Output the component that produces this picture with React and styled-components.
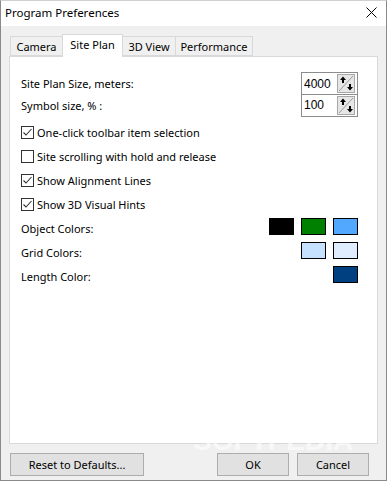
import React from "react";
import styled, { createGlobalStyle } from "styled-components";

const GlobalStyle = createGlobalStyle`
  html, body {
    margin: 0;
    padding: 0;
    background: #f0f0f0;
  }
  body {
    font-family: "Noto Sans", "Open Sans", sans-serif;
    font-size: 11px;
    color: #000;
  }
`;

const Window = styled.div`
  position: relative;
  width: 387px;
  height: 481px;
  box-sizing: border-box;
  border: 1px solid #8a8a8a;
  border-top-color: #d0d0d0;
  display: flex;
  flex-direction: column;
  background: #f0f0f0;
  overflow: hidden;
`;

const TitleBar = styled.div`
  height: 25px;
  flex: none;
  background: #fff;
  display: flex;
  align-items: center;
  justify-content: space-between;
  padding: 0 8px 0 4px;
`;

const Title = styled.span`
  font-size: 11.5px;
  line-height: 1;
  margin-top: -1px;
`;

const CloseButton = styled.div`
  width: 14px;
  height: 14px;
  display: flex;
  align-items: center;
  justify-content: center;
  margin-top: -2px;
`;

const Body = styled.div`
  flex: 1;
  display: flex;
  flex-direction: column;
  padding: 8px 8px 4px 8px;
  min-height: 0;
`;

const TabRow = styled.div`
  display: flex;
  align-items: flex-end;
  height: 22px;
  padding-left: 1px;
  position: relative;
  z-index: 1;
`;

const Tab = styled.div`
  box-sizing: border-box;
  width: ${(p) => p.$w}px;
  height: ${(p) => (p.$active ? 23 : 20)}px;
  margin-bottom: ${(p) => (p.$active ? -1 : 0)}px;
  background: ${(p) => (p.$active ? "#fff" : "#f0f0f0")};
  border: 1px solid #d9d9d9;
  border-bottom: ${(p) => (p.$active ? "none" : "1px solid #d9d9d9")};
  border-left-width: ${(p) => (p.$first || p.$active ? 1 : 0)}px;
  border-right-width: ${(p) => (p.$beforeActive ? 0 : 1)}px;
  display: flex;
  align-items: center;
  justify-content: center;
  white-space: nowrap;
  position: relative;
  z-index: ${(p) => (p.$active ? 2 : 1)};
  padding-bottom: ${(p) => (p.$active ? 3 : 0)}px;
`;

const Panel = styled.div`
  flex: 1;
  background: #fff;
  border: 1px solid #d9d9d9;
  padding: 15px 19px 0 11px;
  display: flex;
  flex-direction: column;
`;

const SpinRow = styled.div`
  display: flex;
  align-items: center;
  justify-content: space-between;
  height: 22px;
`;

const SpinBox = styled.div`
  box-sizing: border-box;
  width: 57px;
  height: ${(p) => (p.$last ? 23 : 22)}px;
  border: 1px solid #8c8c8c;
  border-bottom-width: ${(p) => (p.$last ? 1 : 0)}px;
  display: flex;
  align-items: center;
  justify-content: space-between;
  padding: 0 2px 0 2px;
`;

const SpinValue = styled.span`
  font-family: "Liberation Sans", Arial, sans-serif;
  font-size: 12px;
`;

const SpinButton = styled.div`
  width: 18px;
  height: 19px;
  display: flex;
`;

const CheckList = styled.div`
  display: flex;
  flex-direction: column;
  margin-top: 4px;
`;

const CheckRow = styled.label`
  display: flex;
  align-items: center;
  height: 24px;
  gap: 3px;
`;

const Box = styled.span`
  box-sizing: border-box;
  width: 13px;
  height: 13px;
  border: 1px solid #333;
  background: #fff;
  display: flex;
  align-items: center;
  justify-content: center;
  flex: none;
`;

const ColorRow = styled.div`
  display: flex;
  align-items: center;
  justify-content: space-between;
  height: 24px;
`;

const Swatches = styled.div`
  display: flex;
  gap: 7px;
  margin-top: -3px;
`;

const Swatch = styled.span`
  box-sizing: border-box;
  width: 25px;
  height: 17px;
  border: 1px solid #000;
  background: ${(p) => p.$color};
`;

const Footer = styled.div`
  display: flex;
  align-items: center;
  margin-top: 9px;
  padding-left: 1px;
`;

const Button = styled.button`
  box-sizing: border-box;
  width: ${(p) => p.$w}px;
  height: 23px;
  margin-right: ${(p) => p.$mr || 0}px;
  background: #e1e1e1;
  border: 1px solid #adadad;
  font-family: "Noto Sans", "Open Sans", sans-serif;
  font-size: 11px;
  color: #000;
  padding: 0;
`;

const Watermark = styled.div`
  position: absolute;
  left: 192px;
  top: 426px;
  line-height: 1;
  font-family: "Liberation Sans", Arial, sans-serif;
  font-weight: bold;
  font-size: 28px;
  color: rgba(255, 255, 255, 0.6);
  pointer-events: none;
  z-index: 5;
`;

const SpinArrows = () => (
  <svg width="18" height="19" viewBox="0 0 18 19">
    <rect x="0.5" y="0.5" width="17" height="18" fill="#e6e6e6" stroke="#a8a8a8" />
    <line x1="2" y1="17" x2="16" y2="2" stroke="#9a9a9a" strokeWidth="1" />
    <path d="M6 2.5 L3 6 L9 6 Z" fill="#000" />
    <rect x="5" y="5" width="2" height="4" fill="#000" />
    <path d="M13 16.5 L10 13 L16 13 Z" fill="#000" />
    <rect x="12" y="10" width="2" height="4" fill="#000" />
  </svg>
);

const Spin = ({ value, last }) => (
  <SpinBox $last={last}>
    <SpinValue>{value}</SpinValue>
    <SpinButton>
      <SpinArrows />
    </SpinButton>
  </SpinBox>
);

const Check = ({ checked, children }) => (
  <CheckRow>
    <Box>
      {checked && (
        <svg width="11" height="11" viewBox="0 0 11 11">
          <path d="M1.5 5.5 L4 8 L9.5 2" fill="none" stroke="#333" strokeWidth="1.1" />
        </svg>
      )}
    </Box>
    {children}
  </CheckRow>
);

export default function App() {
  return (
    <>
      <GlobalStyle />
      <Window>
        <TitleBar>
          <Title>Program Preferences</Title>
          <CloseButton>
            <svg width="11" height="11" viewBox="0 0 11 11">
              <path d="M0.5 0.5 L10.5 10.5 M10.5 0.5 L0.5 10.5" stroke="#000" strokeWidth="1" />
            </svg>
          </CloseButton>
        </TitleBar>
        <Body>
          <TabRow>
            <Tab $first $beforeActive $w={52}>Camera</Tab>
            <Tab $active $w={61}>Site Plan</Tab>
            <Tab $w={53}>3D View</Tab>
            <Tab $w={77}>Performance</Tab>
          </TabRow>
          <Panel>
            <SpinRow>
              <span>Site Plan Size, meters:</span>
              <Spin value="4000" />
            </SpinRow>
            <SpinRow>
              <span>Symbol size, % :</span>
              <Spin value="100" last />
            </SpinRow>
            <CheckList>
              <Check checked>One-click toolbar item selection</Check>
              <Check>Site scrolling with hold and release</Check>
              <Check checked>Show Alignment Lines</Check>
              <Check checked>Show 3D Visual Hints</Check>
            </CheckList>
            <ColorRow>
              <span>Object Colors:</span>
              <Swatches>
                <Swatch $color="#000" />
                <Swatch $color="#008000" />
                <Swatch $color="#52a8ff" />
              </Swatches>
            </ColorRow>
            <ColorRow>
              <span>Grid Colors:</span>
              <Swatches>
                <Swatch $color="#c6e0ff" />
                <Swatch $color="#dfedff" />
              </Swatches>
            </ColorRow>
            <ColorRow>
              <span>Length Color:</span>
              <Swatches>
                <Swatch $color="#004080" />
              </Swatches>
            </ColorRow>
          </Panel>
          <Footer>
            <Button $w={134} $mr={73}>Reset to Defaults...</Button>
            <Button $w={72} $mr={8}>OK</Button>
            <Button $w={72}>Cancel</Button>
          </Footer>
        </Body>
        <Watermark>SOFTPEDIA</Watermark>
      </Window>
    </>
  );
}
